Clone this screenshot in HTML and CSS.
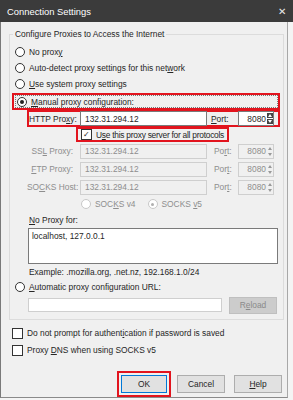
FILE: index.html
```html
<!DOCTYPE html>
<html lang="en">
<head>
<meta charset="UTF-8">
<title>Connection Settings</title>
<link rel="stylesheet" href="styles.css">
</head>
<body>
<div class="titlebar">
  <span class="title">Connection Settings</span>
  <span class="close">&#x2715;</span>
</div>
<div class="dialog">
  <fieldset class="group">
    <legend>Configure Proxies to Access the Internet</legend>
    <div class="row"><span class="radio"></span><span>No prox<u>y</u></span></div>
    <div class="row"><span class="radio"></span><span>Auto-detect proxy settings for this net<u>w</u>ork</span></div>
    <div class="row"><span class="radio"></span><span><u>U</u>se system proxy settings</span></div>
    <div class="row mark mark-manual"><span class="focus"><span class="radio on"></span><span><u>M</u>anual proxy configuration:</span></span></div>

    <div class="proxy-row mark mark-http">
      <span class="label">HTTP Pro<u>x</u>y:</span>
      <span class="input">132.31.294.12</span>
      <span class="port-label"><u>P</u>ort:</span>
      <span class="port">8080</span>
      <span class="spin"><i class="up"></i><i class="down"></i></span>
    </div>
    <div class="all-row"><span class="mark mark-all"><span class="check on">&#x2713;</span><span>U<u>s</u>e this proxy server for all protocols</span></span></div>

    <div class="proxy-row off">
      <span class="label">SS<u>L</u> Proxy:</span>
      <span class="input">132.31.294.12</span>
      <span class="port-label">Po<u>r</u>t:</span>
      <span class="port">8080</span>
      <span class="spin"><i class="up"></i><i class="down"></i></span>
    </div>
    <div class="proxy-row off">
      <span class="label"><u>F</u>TP Proxy:</span>
      <span class="input">132.31.294.12</span>
      <span class="port-label">Por<u>t</u>:</span>
      <span class="port">8080</span>
      <span class="spin"><i class="up"></i><i class="down"></i></span>
    </div>
    <div class="proxy-row off">
      <span class="label">SO<u>C</u>KS Host:</span>
      <span class="input">132.31.294.12</span>
      <span class="port-label">Por<u>t</u>:</span>
      <span class="port">8080</span>
      <span class="spin"><i class="up"></i><i class="down"></i></span>
    </div>
    <div class="socks-row off">
      <span class="radio"></span><span>SOC<u>K</u>S v4</span>
      <span class="radio on gap"></span><span>SOCKS <u>v</u>5</span>
    </div>

    <div class="sub-label"><u>N</u>o Proxy for:</div>
    <div class="textarea">localhost, 127.0.0.1</div>
    <div class="sub-label">Example: .mozilla.org, .net.nz, 192.168.1.0/24</div>

    <div class="row"><span class="radio"></span><span><u>A</u>utomatic proxy configuration URL:</span></div>
    <div class="url-row">
      <span class="input url"></span>
      <span class="button disabled">R<u>e</u>load</span>
    </div>
  </fieldset>

  <div class="row check-row"><span class="check"></span><span>Do not prompt for authent<u>i</u>cation if password is saved</span></div>
  <div class="row check-row"><span class="check"></span><span>Proxy <u>D</u>NS when using SOCKS v5</span></div>

  <div class="buttons">
    <span class="mark mark-ok"><span class="button default">OK</span></span>
    <span class="button">Cancel</span>
    <span class="button"><u>H</u>elp</span>
  </div>
</div>
</body>
</html>
```

FILE: styles.css
```css
body {
  margin: 0;
  background-color: #f4f4f4;
  font-family: "Liberation Sans", Arial, sans-serif;
  font-size: 8.4px;
  color: #262626;
  white-space: nowrap;
}
u {
  text-decoration-thickness: 1px;
  text-underline-offset: 1px;
}
.titlebar {
  height: 22px;
  background-color: #3b3b3b;
  color: #fff;
  display: flex;
  align-items: center;
  justify-content: space-between;
  padding: 0 7px 0 7px;
  font-size: 9.4px;
}
.close {
  font-size: 10px;
  color: #e8e8e8;
}
.dialog {
  width: 288px;
  height: 376px;
  box-sizing: border-box;
  background-color: #f0f0f0;
  border-left: 1px solid #7a7a7a;
  border-right: 1px solid #a8a8a8;
  border-bottom: 1px solid #8a8a8a;
  padding: 7px 4px 0 8px;
}
.group {
  margin: 0;
  width: 275px;
  box-sizing: border-box;
  border: 1px solid #dcdcdc;
  padding: 5px 2px 5px 2px;
}
.group legend {
  padding: 0 2px;
  margin-left: 1px;
}
.row {
  height: 16px;
  display: flex;
  align-items: center;
  padding-left: 3px;
}
.radio {
  width: 8px;
  height: 8px;
  border: 1px solid #333;
  border-radius: 50%;
  background-color: #fff;
  margin-right: 4px;
  flex-shrink: 0;
  display: inline-flex;
  align-items: center;
  justify-content: center;
}
.radio.on::after {
  content: "";
  width: 4px;
  height: 4px;
  border-radius: 50%;
  background-color: #222;
}
.check {
  width: 9px;
  height: 9px;
  border: 1px solid #333;
  background-color: #fff;
  margin-right: 4px;
  flex-shrink: 0;
  display: inline-flex;
  align-items: center;
  justify-content: center;
  font-size: 8px;
  line-height: 1;
}
.mark {
  border: 2px solid #e2141e;
  box-sizing: border-box;
}
.mark-manual {
  height: 17px;
  margin-top: 1px;
  padding-left: 1px;
  margin-right: 1px;
}
.focus {
  display: flex;
  align-items: center;
  flex: 1;
  height: 11px;
  border: 1px dotted #777;
  padding-left: 1px;
}
.proxy-row {
  display: flex;
  align-items: center;
  height: 18px;
  margin-left: 15px;
  margin-right: 1px;
  padding-right: 1px;
}
.mark-http {
  height: 17px;
}
.label {
  width: 46px;
  text-align: right;
  margin-right: 7px;
}
.mark-http .label {
  width: 44px;
}
.input {
  width: 127px;
  height: 15px;
  box-sizing: border-box;
  border: 1px solid #7a7a7a;
  background-color: #fff;
  padding-left: 4px;
  display: flex;
  align-items: center;
}
.port-label {
  width: 27px;
  margin-left: 4px;
}
.off .port-label {
  width: 24px;
  margin-left: 7px;
}
.port {
  width: 29px;
  height: 15px;
  box-sizing: border-box;
  border: 1px solid #7a7a7a;
  border-right: 0;
  background-color: #fff;
  display: flex;
  align-items: center;
  justify-content: flex-end;
  padding-right: 1px;
}
.spin {
  width: 7px;
  height: 15px;
  display: flex;
  flex-direction: column;
  justify-content: center;
  gap: 1px;
  border: 1px solid #7a7a7a;
  border-left: 0;
  background-color: #fff;
  box-sizing: border-box;
}
.spin i {
  display: block;
  height: 5px;
  background-color: #444;
  position: relative;
}
.spin i::after {
  content: "";
  position: absolute;
  left: 1px;
  border-left: 2px solid transparent;
  border-right: 2px solid transparent;
}
.spin .up::after {
  top: 1px;
  border-bottom: 3px solid #fff;
}
.spin .down::after {
  top: 1px;
  border-top: 3px solid #fff;
}
.off {
  color: #8e8e8e;
}
.off .input,
.off .port,
.off .spin {
  background-color: #f0f0f0;
  border-color: #cfcfcf;
}
.off .spin i {
  background-color: transparent;
}
.off .spin .up::after {
  border-bottom-color: #999;
}
.off .spin .down::after {
  border-top-color: #999;
}
.all-row {
  display: flex;
  padding-left: 64px;
  height: 15px;
  align-items: center;
}
.mark-all {
  display: flex;
  align-items: center;
  height: 15px;
  padding: 0 3px 0 3px;
  letter-spacing: -0.25px;
}
.socks-row {
  display: flex;
  align-items: center;
  height: 16px;
  padding-left: 69px;
}
.socks-row .radio {
  border-color: #c8c8c8;
}
.socks-row .radio.on::after {
  background-color: #b0b0b0;
  width: 3px;
  height: 3px;
}
.socks-row .gap {
  margin-left: 12px;
}
.sub-label {
  height: 15px;
  display: flex;
  align-items: center;
  padding-left: 17px;
}
.textarea {
  margin: 1px 0 0 16px;
  width: 250px;
  height: 36px;
  box-sizing: border-box;
  border: 1px solid #7a7a7a;
  background-color: #fff;
  padding: 2px 3px;
}
.url-row {
  display: flex;
  align-items: center;
  gap: 7px;
  margin: 1px 0 0 16px;
  height: 18px;
}
.input.url {
  width: 194px;
  height: 14px;
  border-color: #cfcfcf;
}
.button {
  display: inline-flex;
  align-items: center;
  justify-content: center;
  width: 48px;
  height: 18px;
  box-sizing: border-box;
  border: 1px solid #adadad;
  background-color: #e1e1e1;
}
.button.disabled {
  background-color: #cccccc;
  border-color: #bfbfbf;
  color: #8a8a8a;
  height: 17px;
}
.check-row {
  padding-left: 3px;
}
.check-row:first-of-type {
  margin-top: 5px;
}
.dialog > .check-row + .check-row {
  margin-top: 1px;
}
.buttons {
  display: flex;
  justify-content: flex-end;
  align-items: center;
  gap: 9px;
  margin-top: 13px;
  padding-right: 1px;
}
.mark-ok {
  display: flex;
  padding: 2px;
  margin-right: -3px;
}
.button.default {
  border: 1px solid #0078d7;
  width: 46px;
}
```
